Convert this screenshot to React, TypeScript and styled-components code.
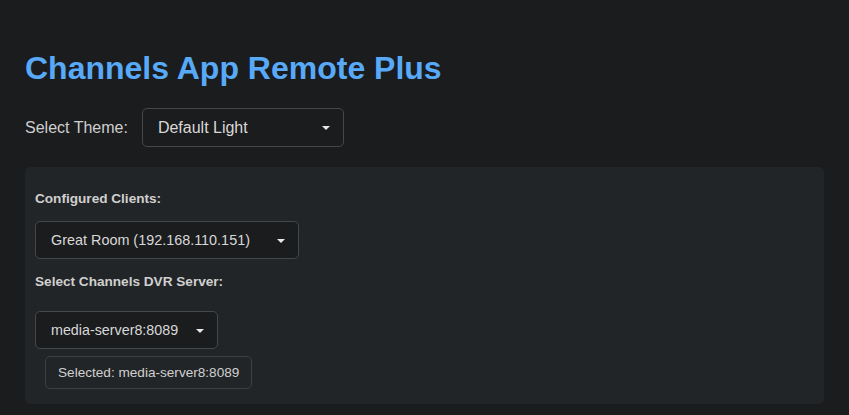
import React from "react";
import styled, { createGlobalStyle } from "styled-components";

const Global = createGlobalStyle`
  html, body { margin: 0; padding: 0; background: #1b1c1e; }
  body { font-family: "Liberation Sans", Arial, sans-serif; color: #d0d0d0; }
`;

const Page = styled.div`
  padding: 48px 25px 12px 25px;
  min-height: 415px;
  box-sizing: border-box;
`;

const Title = styled.h1`
  margin: 0 0 20px 0;
  font-size: 32px;
  line-height: 40px;
  font-weight: 700;
  color: #58a9f7;
`;

const ThemeRow = styled.div`
  display: flex;
  align-items: center;
  gap: 14px;
  margin-bottom: 20px;
`;

const Label = styled.span`
  font-size: 16px;
  color: #cfcfcf;
`;

const SelectBox = styled.div<{ $w: number; $h: number; $fs: number }>`
  display: flex;
  align-items: center;
  justify-content: space-between;
  box-sizing: border-box;
  width: ${(p) => p.$w}px;
  height: ${(p) => p.$h}px;
  padding: 0 13px 0 15px;
  border: 1px solid #45484b;
  border-radius: 5px;
  background: #1b1c1e;
  color: #d8d8d8;
  font-size: ${(p) => p.$fs}px;
`;

const Caret = styled.span`
  width: 0;
  height: 0;
  border-left: 4px solid transparent;
  border-right: 4px solid transparent;
  border-top: 4px solid #e8e8e8;
  margin-top: 1px;
`;

const Panel = styled.section`
  background: #222527;
  border-radius: 5px;
  padding: 24px 10px 15px 10px;
  display: flex;
  flex-direction: column;
  align-items: flex-start;
`;

const SectionLabel = styled.div<{ $mb: number }>`
  font-size: 13.6px;
  font-weight: 700;
  color: #d0d0d0;
  line-height: 16px;
  margin-bottom: ${(p) => p.$mb}px;
`;

const Gap = styled.div<{ $h: number }>`
  height: ${(p) => p.$h}px;
`;

const SelectedTag = styled.div`
  margin: 7px 0 0 10px;
  box-sizing: border-box;
  height: 33px;
  display: flex;
  align-items: center;
  padding: 0 12px;
  border: 1px solid #3d4043;
  border-radius: 5px;
  font-size: 13.6px;
  color: #d0d0d0;
`;

function Select({ value, w, h, fs }: { value: string; w: number; h: number; fs: number }) {
  return (
    <SelectBox $w={w} $h={h} $fs={fs}>
      <span>{value}</span>
      <Caret />
    </SelectBox>
  );
}

export default function App() {
  return (
    <Page>
      <Global />
      <Title>Channels App Remote Plus</Title>
      <ThemeRow>
        <Label>Select Theme:</Label>
        <Select value="Default Light" w={202} h={39} fs={16} />
      </ThemeRow>
      <Panel>
        <SectionLabel $mb={14}>Configured Clients:</SectionLabel>
        <Select value="Great Room (192.168.110.151)" w={264} h={38} fs={14.4} />
        <Gap $h={15} />
        <SectionLabel $mb={21}>Select Channels DVR Server:</SectionLabel>
        <Select value="media-server8:8089" w={183} h={38} fs={14.3} />
        <SelectedTag>Selected: media-server8:8089</SelectedTag>
      </Panel>
    </Page>
  );
}
